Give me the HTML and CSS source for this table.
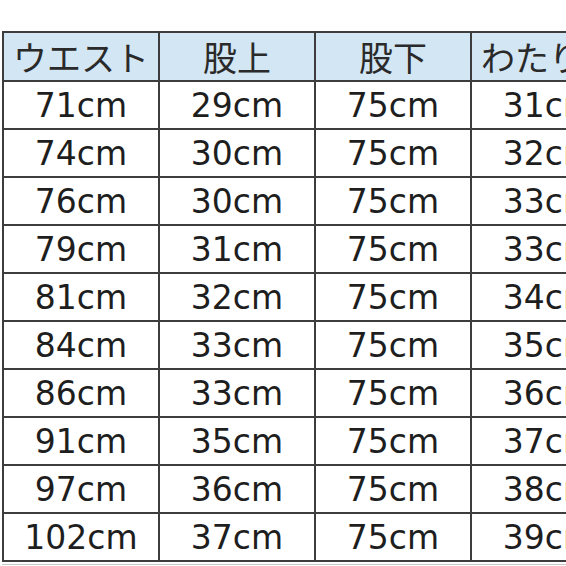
FILE: index.html
```html
<!DOCTYPE html>
<html lang="ja">
<head>
<meta charset="utf-8">
<link rel="stylesheet" href="styles.css">
</head>
<body>
<div class="sheet">
  <div class="cell head">ウエスト</div>
  <div class="cell head">股上</div>
  <div class="cell head">股下</div>
  <div class="cell head">わたり幅</div>

  <div class="cell">71cm</div><div class="cell">29cm</div><div class="cell">75cm</div><div class="cell">31cm</div>
  <div class="cell">74cm</div><div class="cell">30cm</div><div class="cell">75cm</div><div class="cell">32cm</div>
  <div class="cell">76cm</div><div class="cell">30cm</div><div class="cell">75cm</div><div class="cell">33cm</div>
  <div class="cell">79cm</div><div class="cell">31cm</div><div class="cell">75cm</div><div class="cell">33cm</div>
  <div class="cell">81cm</div><div class="cell">32cm</div><div class="cell">75cm</div><div class="cell">34cm</div>
  <div class="cell">84cm</div><div class="cell">33cm</div><div class="cell">75cm</div><div class="cell">35cm</div>
  <div class="cell">86cm</div><div class="cell">33cm</div><div class="cell">75cm</div><div class="cell">36cm</div>
  <div class="cell">91cm</div><div class="cell">35cm</div><div class="cell">75cm</div><div class="cell">37cm</div>
  <div class="cell">97cm</div><div class="cell">36cm</div><div class="cell">75cm</div><div class="cell">38cm</div>
  <div class="cell">102cm</div><div class="cell">37cm</div><div class="cell">75cm</div><div class="cell">39cm</div>
</div>
</body>
</html>
```
FILE: styles.css
```css
html, body {
  margin: 0;
  padding: 0;
  background: #ffffff;
  overflow: hidden;
  width: 566px;
  height: 566px;
}
body {
  padding: 31px 0 0 2px;
  box-sizing: border-box;
  font-family: "DejaVu Sans", "Noto Sans CJK JP", sans-serif;
}
.sheet {
  display: grid;
  grid-template-columns: repeat(4, 154px);
  grid-template-rows: 47px repeat(10, 46px);
  gap: 2px;
  padding: 2px;
  background: #3d3d3d;
  width: max-content;
  box-shadow: 0 2px 0 #ffffff, 0 3px 0 #c8c8c8;
}
.cell {
  background: #ffffff;
  color: #1e1e1e;
  font-size: 33px;
  display: flex;
  align-items: center;
  justify-content: center;
  white-space: nowrap;
  overflow: hidden;
  line-height: 1;
}
.head {
  background: #d3e6f3;
  color: #2a2a2a;
  font-family: "Noto Sans CJK JP", sans-serif;
  font-size: 34px;
  font-weight: 400;
}
```
